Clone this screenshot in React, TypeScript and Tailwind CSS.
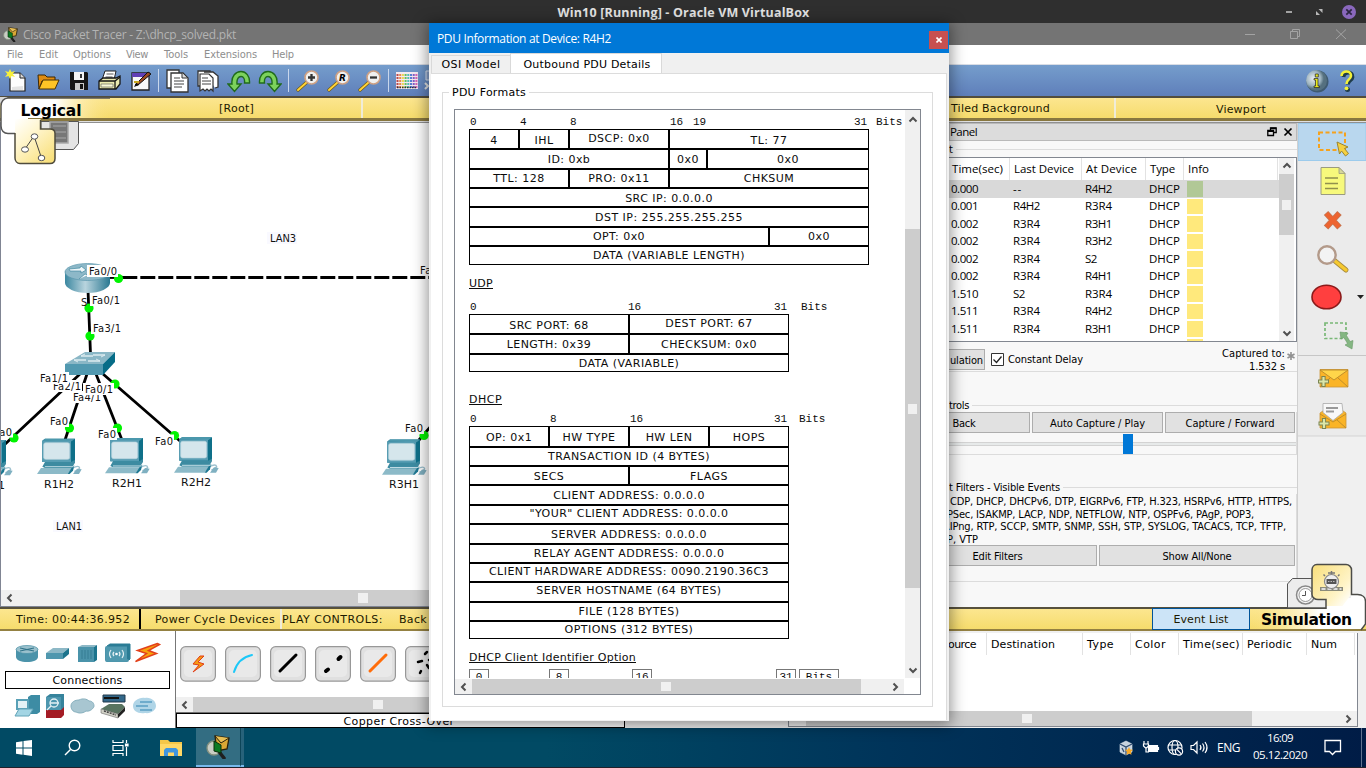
import React, { useLayoutEffect, useRef } from "react";

const VERDANA = "font-['DejaVu_Sans',sans-serif]";
const TAHOMA = "font-['DejaVu_Sans_Condensed','DejaVu_Sans',sans-serif]";
const SEGOE = "font-['Open_Sans','Noto_Sans',sans-serif]";

/** Text tracked so that its run takes exactly `w` pixels. */
function Fit({ w, className = "", flat = false, children }: { w: number; className?: string; flat?: boolean; children: string }) {
  const ref = useRef<HTMLSpanElement>(null);
  useLayoutEffect(() => {
    const el = ref.current;
    if (!el) return;
    el.style.letterSpacing = "0px";
    const natural = el.getBoundingClientRect().width;
    el.style.letterSpacing = `${(w - natural) / children.length}px`;
  }, [w, children]);
  return (
    <span ref={ref} className={`inline-block shrink-0 whitespace-nowrap ${flat ? "" : "pt-[2px]"} ${className}`}>
      {children}
    </span>
  );
}

function Chevron({ dir }: { dir: "up" | "down" | "left" | "right" }) {
  const d = {
    up: "M1.5 6.5L5 3l3.5 3.5",
    down: "M1.5 3.5L5 7l3.5-3.5",
    left: "M6.5 1.5L3 5l3.5 3.5",
    right: "M3.5 1.5L7 5 3.5 8.5",
  }[dir];
  return (
    <svg width="10" height="10" viewBox="0 0 10 10" className="shrink-0">
      <path d={d} fill="none" stroke="#505050" strokeWidth="2" />
    </svg>
  );
}

/* ---------- toolbar ---------- */

const toolIcons: Record<string, React.ReactNode> = {
  new: (
    <>
      <path d="M5 4h10l5 5v13H5z" fill="#fdfdfd" stroke="#222" strokeWidth="1.2" />
      <path d="M15 4v5h5" fill="#ddd" stroke="#222" />
      <path d="M7 18l11-1v4H7z" fill="#e4e4e4" />
      <path d="M5 0l1.5 3L10 2 7.700 5 10 8 6.500 7 5 10 3.500 7 0 8l2.300-3L0 2l3.500 1z" fill="#f7f03c" />
    </>
  ),
  open: (
    <>
      <path d="M2 6h7l2 2h8v4H6L3 20z" fill="#e08c10" stroke="#3c2703" />
      <path d="M7 11h16l-4 9H3z" fill="#ffc426" stroke="#4c3205" />
    </>
  ),
  save: (
    <>
      <path d="M3 3h17l1 1v17H4l-1-1z" fill="#151515" />
      <path d="M7 3h10v8H7z" fill="#f5f5f5" />
      <path d="M13 5h2v4h-2z" fill="#333" />
      <path d="M8 14h9v7H8z" fill="#c9c9c9" />
      <path d="M13 15h3v5h-3z" fill="#111" />
    </>
  ),
  print: (
    <>
      <path d="M7 2h11l-2 9H4z" fill="#fff" stroke="#222" />
      <path d="M8.500 5h7M7.500 8h7" stroke="#555" />
      <path d="M1 12l4-3h13l4-2v8l-4 5H1z" fill="#e9e9b0" stroke="#151515" strokeWidth="1.300" />
      <path d="M1 12h16l5-4M17 12v8" fill="none" stroke="#151515" strokeWidth="1.300" />
      <path d="M3 15h12v3H3z" fill="#f9f9d8" stroke="#555" strokeWidth=".6" />
    </>
  ),
  edit: (
    <>
      <path d="M3 4h17v17H3z" fill="#f8f8f8" stroke="#222" strokeWidth="1.300" />
      <path d="M3 4h17v4H3z" fill="#6140b5" />
      <path d="M6 16L19 3l3 2L9 16z" fill="#9a4a20" stroke="#111" />
      <path d="M5 18l2-4 3 2z" fill="#111" />
      <path d="M5 13h5" stroke="#c7a81e" strokeWidth="2" />
    </>
  ),
  copy: (
    <>
      <path d="M2 1h12v18H2z" fill="#fff" stroke="#333" strokeWidth="1.300" />
      <path d="M6 4h12l5 5v14H6z" fill="#fff" stroke="#333" strokeWidth="1.300" />
      <path d="M17 4v5h5" fill="#ddd" stroke="#333" />
      <path d="M9 9h6M9 12h10M9 15h10M9 18h8" stroke="#444" strokeWidth="1.200" />
    </>
  ),
  paste: (
    <>
      <path d="M2 2h12v15H2z" fill="#fff" stroke="#333" strokeWidth="1.300" />
      <path d="M8 3h9l5 4v11l-3 1" fill="#fff" stroke="#333" strokeWidth="1.300" />
      <path d="M4 5h9l4 4v13l-2-2-2 2-2-2-2 2-2-2-3 2z" fill="#fff" stroke="#333" strokeWidth="1.200" />
      <path d="M6 9h6M6 12h9M6 15h9" stroke="#444" strokeWidth="1.200" />
    </>
  ),
  undo: (
    <path
      d="M1 15h4C4 7 9 2.500 14 2.500S23 7 22.500 14h-5c.5-4-1-6.500-3.500-6.500S9.500 10 10 15h4l-6.500 7.500z"
      fill="#7cd25c"
      stroke="#206b1c"
      strokeWidth="1.400"
    />
  ),
  redo: (
    <path
      d="M23 15h-4c1-8-4-12.500-9-12.500S1 7 1.500 14h5C6 10 7.500 7.500 10 7.500s4.500 2.500 4 7.500h-4l6.500 7.500z"
      fill="#7cd25c"
      stroke="#206b1c"
      strokeWidth="1.400"
    />
  ),
  palette: (
    <>
      <path d="M1 3h22v17H1z" fill="#f4e9f0" />
      {["#b03030", "#e87b2e", "#e8d63a", "#4dbb48", "#39b5b0", "#3c6fd0", "#7046c0", "#d04fae"].map((c, i) => (
        <path key={c} d={`M${2.5 + i * 2.7} 5v14`} stroke={c} strokeWidth="2" strokeDasharray="2 1" opacity={0.85} />
      ))}
      <path d="M2 18.500h20" stroke="#333" strokeDasharray="1.500 1" strokeWidth="1.500" />
    </>
  ),
};

function Lens({ mark }: { mark: "+" | "R" | "-" }) {
  return (
    <>
      <path d="M2 21L11 13" stroke="#6d5410" strokeWidth="3.200" strokeLinecap="round" />
      <path d="M2 21L11 13" stroke="#ffd337" strokeWidth="2" strokeLinecap="round" />
      <circle cx="15.500" cy="8.500" r="6.500" fill="#f0f0f0" stroke="#cfa184" strokeWidth="1.600" />
      {mark === "R" ? (
        <text x="15.500" y="12" textAnchor="middle" fontSize="9" fontWeight="700" fontStyle="italic" fontFamily="DejaVu Sans">
          R
        </text>
      ) : (
        <path d={mark === "+" ? "M12 8.500h7M15.500 5v7" : "M12 8.500h7"} stroke="#333" strokeWidth="2.300" />
      )}
    </>
  );
}

function Tool({ children }: { children: React.ReactNode }) {
  return (
    <div className="flex w-[31px] shrink-0 justify-center">
      <svg width="24" height="24" viewBox="0 0 24 24">
        {children}
      </svg>
    </div>
  );
}

function Toolbar() {
  const sep = <div className="h-[23px] w-px shrink-0 bg-[#c8d6ec]" />;
  return (
    <div className="flex h-[31px] shrink-0 items-center bg-linear-to-b from-[#759dcc] to-[#5f7fba] pl-px">
      <Tool>{toolIcons.new}</Tool>
      <Tool>{toolIcons.open}</Tool>
      <Tool>{toolIcons.save}</Tool>
      <Tool>{toolIcons.print}</Tool>
      <Tool>{toolIcons.edit}</Tool>
      <div className="flex w-[5px] justify-center">{sep}</div>
      <Tool>{toolIcons.copy}</Tool>
      <Tool>{toolIcons.paste}</Tool>
      <Tool>{toolIcons.undo}</Tool>
      <Tool>{toolIcons.redo}</Tool>
      <div className="flex w-[7px] justify-center">{sep}</div>
      <Tool><Lens mark="+" /></Tool>
      <Tool><Lens mark="R" /></Tool>
      <Tool><Lens mark="-" /></Tool>
      <div className="flex w-[6px] justify-center">{sep}</div>
      <Tool>{toolIcons.palette}</Tool>
      <svg width="12" height="24" viewBox="0 0 12 24">
        <path d="M4 2h9v9H4z" fill="#8aa3cc" stroke="#dfe6f2" />
        <path d="M3 14l3 3-3 3M8 14v7" stroke="#e5e5e5" strokeWidth="2" fill="none" />
      </svg>
      <div className="ml-auto flex items-center gap-[10px] pr-[10px]">
        <svg width="24" height="24" viewBox="0 0 24 24">
          <defs>
            <radialGradient id="info" cx=".35" cy=".4">
              <stop offset="0" stopColor="#e8edf0" />
              <stop offset=".7" stopColor="#9db3bf" />
              <stop offset="1" stopColor="#55707f" />
            </radialGradient>
          </defs>
          <circle cx="12.500" cy="12.500" r="11" fill="#3f5a70" />
          <circle cx="11.500" cy="11.500" r="10.500" fill="url(#info)" />
          <path d="M9 9.500h4V17h1.500v1.500H9V17h1.500v-6H9zM10.300 5h3v3h-3z" fill="#e9ea1e" stroke="#222" strokeWidth=".7" />
        </svg>
        <svg width="17" height="24" viewBox="0 0 17 24">
          <path d="M4.500 8C5 2 14 2 13.500 8c-.3 3.500-4.500 3.500-4.500 7.500" fill="none" stroke="#1f3c4a" strokeWidth="3.800" />
          <path d="M2.500 7C3 1 12.500 1 12 7c-.3 3.500-4.500 3.500-4.500 8" fill="none" stroke="#f3f13a" strokeWidth="2.600" />
          <circle cx="8.500" cy="20.500" r="2.500" fill="#1f3c4a" />
          <circle cx="7.500" cy="19.300" r="1.900" fill="#f3f13a" />
        </svg>
      </div>
    </div>
  );
}

/* ---------- logical workspace ---------- */

function Pc({ x, y }: { x: number; y: number }) {
  return (
    <g transform={`translate(${x} ${y}) scale(.3333)`}>
      <path d="M106 88q20-10 22 0-4 8-16 10" fill="none" stroke="#9cc0ce" strokeWidth="4" />
      <path d="M120 90l14 2-8 14h-18z" fill="#7fb0c1" />
      <path d="M26 66h80l8-4v10l-10 16H24l-8-4z" fill="#3d8ba1" />
      <path d="M12 88h94l-14 18H0z" fill="#8cbac8" />
      <path d="M106 84l6-4-4 16-10 10h-6z" fill="#1d7791" />
      <path d="M24 84h86" stroke="#c3dde5" strokeWidth="3" />
      <path d="M16 6l8-6h90v64l-12 6H16z" fill="#0f7089" />
      <path d="M16 6l8-6h90l-10 8z" fill="#4b98ad" />
      <path d="M16 6h86v64H16z" fill="#579db3" />
      <rect x="20" y="12" width="78" height="50" rx="6" fill="#d5e6ec" stroke="#b8d4de" strokeWidth="2" />
    </g>
  );
}

function Dot({ x, y }: { x: number; y: number }) {
  return <circle cx={x} cy={y} r="4.600" fill="#00f400" />;
}

function NodeText({ x, y, w, children, box = true, wide = false }: { x: number; y: number; w: number; children: string; box?: boolean; wide?: boolean }) {
  return (
    <g>
      {box && <rect x={x - 2} y={y - 6} width={w + 3} height="12" fill="#fff" />}
      <text x={x} y={y + 4} textLength={w} fontSize="11" fontFamily={wide ? "'DejaVu Sans'" : "'DejaVu Sans Condensed','DejaVu Sans'"} fill="#111">
        {children}
      </text>
    </g>
  );
}

function Workspace() {
  return (
    <svg width="428" height="467" viewBox="1 123 428 467" className="block shrink-0 bg-white">
      <defs>
        <linearGradient id="steel">
          <stop offset="0" stopColor="#3b87a0" />
          <stop offset=".45" stopColor="#b9d4de" />
          <stop offset="1" stopColor="#2a7891" />
        </linearGradient>
      </defs>
      <path d="M110 277.500H124" stroke="#000" strokeWidth="2.800" />
      <path d="M122.300 277.500H429" stroke="#000" strokeWidth="2.800" strokeDasharray="15 3" />
      <g stroke="#000" strokeWidth="2.800">
        <path d="M88 290l2.500 64M80 374L2 447M87 374L65 440M96 374l26 66M103 374l77 67M419 440l12-14" />
      </g>
      <path d="M65 271v12c0 5 10 10 22.500 10S110 288 110 283v-12z" fill="url(#steel)" />
      <ellipse cx="87.500" cy="272" rx="22.500" ry="8.500" fill="#8db8c8" stroke="#5b98ad" strokeWidth=".7" />
      <path d="M69 269l11-1 1-2 5 4-5 3v-2l-11 0zM79 279l6-5 3 1" fill="#eef6f9" stroke="#2f7e97" strokeWidth=".6" />
      <path d="M65 364l20-12h30l-12 12z" fill="#8ab7c6" />
      <path d="M65 364h38v11H65z" fill="#5199b0" />
      <path d="M103 364l12-12v10l-12 13z" fill="#066c87" />
      <path d="M81 356h12M74 360h12M93 355h12M88 361h12" stroke="#dcebf0" strokeWidth="1.500" />
      <path d="M81 356l4-2M105 355l-4 2M74 360l4 2M100 361l-4-2" stroke="#dcebf0" />
      <Dot x={14} y={438} />
      <Dot x={69.5} y={428} />
      <Dot x={117.5} y={428} />
      <Dot x={174.5} y={435.5} />
      <Dot x={115} y={384} />
      <Dot x={118.5} y={278.5} />
      <Dot x={89} y={308} />
      <Dot x={90} y={336} />
      <Dot x={424} y={435.5} />
      <Pc x={-32} y={440} />
      <Pc x={37} y={438.7} />
      <Pc x={105} y={438} />
      <Pc x={174} y={437.3} />
      <Pc x={382} y={439.5} />
      <NodeText x={81} y={302} w={7} box={false}>S</NodeText>
      <NodeText x={89} y={271} w={28}>Fa0/0</NodeText>
      <NodeText x={92} y={300} w={28}>Fa0/1</NodeText>
      <NodeText x={93} y={328} w={28}>Fa3/1</NodeText>
      <NodeText x={73} y={397} w={28}>Fa4/1</NodeText>
      <NodeText x={53} y={386} w={28}>Fa2/1</NodeText>
      <NodeText x={40} y={378} w={28}>Fa1/1</NodeText>
      <NodeText x={85} y={389} w={28}>Fa0/1</NodeText>
      <NodeText x={-6} y={431.5} w={18}>Fa0</NodeText>
      <NodeText x={50} y={421} w={18}>Fa0</NodeText>
      <NodeText x={98} y={434} w={18}>Fa0</NodeText>
      <NodeText x={155} y={440.5} w={18}>Fa0</NodeText>
      <NodeText x={420} y={270} w={18}>Fa0</NodeText>
      <NodeText x={405} y={428} w={18}>Fa0</NodeText>
      <NodeText x={-24} y={485} w={29} box={false} wide>R1H1</NodeText>
      <NodeText x={44} y={483.5} w={30} box={false} wide>R1H2</NodeText>
      <NodeText x={112} y={482.5} w={30} box={false} wide>R2H1</NodeText>
      <NodeText x={181} y={481.5} w={30} box={false} wide>R2H2</NodeText>
      <NodeText x={389} y={484} w={30} box={false} wide>R3H1</NodeText>
      <rect x="267" y="232" width="30" height="12" fill="#f9f9ff" />
      <rect x="53" y="520" width="30" height="12" fill="#f9f9ff" />
      <NodeText x={270} y={238} w={26} box={false}>LAN3</NodeText>
      <NodeText x={56} y={526} w={26} box={false}>LAN1</NodeText>
    </svg>
  );
}

/* ---------- simulation panel ---------- */

const events = [
  ["0.000", "--", "R4H2"],
  ["0.001", "R4H2", "R3R4"],
  ["0.002", "R3R4", "R3H1"],
  ["0.002", "R3R4", "R3H2"],
  ["0.002", "R3R4", "S2"],
  ["0.002", "R3R4", "R4H1"],
  ["1.510", "S2", "R3R4"],
  ["1.511", "R3R4", "R4H2"],
  ["1.511", "R3R4", "R3H1"],
];

function EventTable() {
  const head = "flex h-full items-center border-r border-[#e2e2e2]";
  return (
    <div className={`flex h-[185px] shrink-0 overflow-hidden border-y border-r border-[#828790] bg-white text-[11.5px] text-black ${SEGOE}`}>
      <div className="w-[330px] shrink-0">
        <div className="flex h-[22px] items-center">
          <div className={`${head} w-[61px] pl-[3px]`}><Fit flat w={51}>Time(sec)</Fit></div>
          <div className={`${head} w-[72px] pl-[4px]`}><Fit flat w={60}>Last Device</Fit></div>
          <div className={`${head} w-[64px] pl-[4px]`}><Fit flat w={51}>At Device</Fit></div>
          <div className={`${head} w-[38px] pl-[4px]`}><Fit flat w={25}>Type</Fit></div>
          <div className={`${head} w-[94px] pl-[4px]`}><Fit flat w={21}>Info</Fit></div>
        </div>
        {events.map(([t, last, at], i) => (
          <div key={i} className={`flex h-[17.5px] items-center ${i === 0 ? "bg-[#d9d9d9]" : ""}`}>
            <div className="w-[64px] pl-[2px]"><Fit flat w={27}>{t}</Fit></div>
            <div className="w-[72px]"><Fit flat w={last.length === 4 ? 27 : last === "--" ? 9 : 12}>{last}</Fit></div>
            <div className="w-[64px]"><Fit flat w={at.length === 4 ? 27 : 12}>{at}</Fit></div>
            <div className="w-[38px]"><Fit flat w={31}>DHCP</Fit></div>
            <div className={`h-[15.5px] w-[16px] ${i === 0 ? "bg-[#b1c896]" : "bg-[#ffe97c]"}`} />
          </div>
        ))}
        <div className="mt-px ml-[238px] h-[5px] w-[16px] bg-[#ffe97c]" />
      </div>
      <div className="flex w-[15px] shrink-0 flex-col items-center bg-[#f0f0f0]">
        <div className="flex h-[16px] items-center"><Chevron dir="up" /></div>
        <div className="flex h-[61px] w-full items-center justify-center bg-[#cdcdcd]">
          <div className="h-[10px] w-[9px] bg-[#f0f0f0]" />
        </div>
        <div className="mt-auto flex h-[17px] items-center"><Chevron dir="down" /></div>
      </div>
    </div>
  );
}

function PushButton({ className, children, w }: { className: string; children: string; w: number }) {
  return (
    <div className={`flex h-[21px] shrink-0 items-center justify-center border border-[#adadad] bg-[#e1e1e1] ${className}`}>
      <Fit w={w}>{children}</Fit>
    </div>
  );
}

function SimulationPanel() {
  return (
    <div className={`flex w-[348px] shrink-0 flex-col overflow-hidden bg-[#f8f8f8] text-[11px] leading-[12px] text-black ${TAHOMA}`}>
      <div className="flex h-[18px] shrink-0 items-center border border-[#b9b9b9] bg-[#dcdcdc] pr-[3px]">
        <Fit flat w={27} className={`text-[11.5px] ${SEGOE}`}>Panel</Fit>
        <svg width="26" height="10" viewBox="0 0 26 10" className="ml-auto">
          <path d="M3.500 3V.8h5.700v4.700H7M.800 3.500h5.700v5H.800z" fill="none" stroke="#000" strokeWidth="1.300" />
          <path d="M3.500 1.300h5.700M.800 4.200h5.700" stroke="#000" strokeWidth="1.700" />
          <path d="M17.500 1.500l7 7M24.500 1.500l-7 7" stroke="#000" strokeWidth="1.700" />
        </svg>
      </div>
      <div className="flex h-[16px] shrink-0 items-center gap-[3px] pt-px">
        <span className="pt-px">t</span>
        <div className="h-px grow bg-[#dcdcdc]" />
      </div>
      <EventTable />
      <div className="flex h-[30px] shrink-0 items-center border-b border-[#dcdcdc] pt-[5px]">
        <PushButton className="mt-[2px] -ml-px w-[37px] self-start" w={33}>ulation</PushButton>
        <svg width="13" height="13" viewBox="0 0 13 13" className="ml-[6px] shrink-0">
          <path d="M.5.5h12v12H.5z" fill="#fff" stroke="#333" />
          <path d="M2.500 6.500l3 3 5-6" fill="none" stroke="#222" strokeWidth="1.300" />
        </svg>
        <Fit w={75} className="ml-[4px]">Constant Delay</Fit>
        <div className="-mt-[1px] ml-auto flex flex-col items-end leading-[11px]">
          <Fit w={63}>Captured to:</Fit>
          <Fit w={36}>1.532 s</Fit>
        </div>
        <svg width="10" height="10" viewBox="0 0 10 10" className="-mt-[7px] mr-[1px] ml-px">
          <path d="M5 1v8M1.500 3l7 4M8.500 3l-7 4" stroke="#909090" strokeWidth="1.600" />
        </svg>
      </div>
      <div className="mt-[26px] flex h-[14px] shrink-0 items-center gap-[3px]">
        <Fit w={20}>trols</Fit>
        <div className="h-px grow bg-[#dcdcdc]" />
      </div>
      <div className="flex shrink-0 flex-col border-r border-b border-[#dcdcdc]">
        <div className="flex gap-[2px]">
          <PushButton className="-ml-px w-[82px] pr-[50px]" w={23}>Back</PushButton>
          <PushButton className="w-[131px]" w={95}>Auto Capture / Play</PushButton>
          <PushButton className="w-[130px]" w={89}>Capture / Forward</PushButton>
        </div>
        <div className="flex h-[21px] items-center">
          <div className="h-[4px] w-[174px] border-y border-[#d3d3d3] bg-[#e7eaea]" />
          <div className="h-[20px] w-[10px] bg-[#0078d7]" />
          <div className="h-[4px] grow border-y border-[#d3d3d3] bg-[#e7eaea]" />
        </div>
      </div>
      <div className="mt-[25px] flex h-[14px] shrink-0 items-center gap-[3px]">
        <Fit w={111}>t Filters - Visible Events</Fit>
        <div className="h-px grow bg-[#dcdcdc]" />
      </div>
      <div className="flex h-[88px] shrink-0 flex-col border-r border-b border-[#dcdcdc]">
        <div className="flex h-[51px] shrink-0 flex-col items-start pt-[2px] leading-[12.6px]">
          <Fit flat w={342} className="ml-px">CDP, DHCP, DHCPv6, DTP, EIGRPv6, FTP, H.323, HSRPv6, HTTP, HTTPS,</Fit>
          <Fit flat w={307} className="-ml-[2px]">PSec, ISAKMP, LACP, NDP, NETFLOW, NTP, OSPFv6, PAgP, POP3,</Fit>
          <Fit flat w={343} className="-ml-[6px]">RIPng, RTP, SCCP, SMTP, SNMP, SSH, STP, SYSLOG, TACACS, TCP, TFTP,</Fit>
          <Fit flat w={31} className="-ml-[2px]">P, VTP</Fit>
        </div>
        <div className="flex gap-[2px]">
          <PushButton className="-ml-px w-[149px] pr-[50px] pl-0" w={50}>Edit Filters</PushButton>
          <PushButton className="w-[196px]" w={69}>Show All/None</PushButton>
        </div>
      </div>
    </div>
  );
}

function SideTools() {
  return (
    <div className="flex w-[69px] shrink-0 flex-col border-l border-[#d0d0d0] bg-[#f0f0f0]">
      <svg width="68" height="314" viewBox="1298 123 68 314" className="block">
        <path d="M1298 123h68v313h-68z" fill="#ebebeb" />
        <path d="M1298 123.500h68v37h-68z" fill="#b9d7ee" stroke="#9ccbec" />
        <rect x="1319" y="132.500" width="26" height="17.500" fill="none" stroke="#f5a21d" strokeWidth="2" strokeDasharray="4 2.500" />
        <path d="M1337 142l11 5-3.500 1.500 4 5-3 2.500-4-5-2 3z" fill="#f5d040" stroke="#9b8531" />
        <path d="M1321 167.500h18l6 6v21h-24z" fill="#f7f97c" stroke="#9b9b80" />
        <path d="M1339 167.500v6h6z" fill="#d6d89a" stroke="#9b9b80" strokeWidth=".8" />
        <path d="M1325 178h13M1325 183.500h13M1325 188.500h13" stroke="#90904d" strokeWidth="1.400" />
        <path d="M1326 213l13.500 14.500M1339.500 213L1326 227.500" stroke="#c47652" strokeWidth="6" />
        <path d="M1326.500 213.500l12.500 13.500M1339 213.500L1326.500 227" stroke="#ed6430" strokeWidth="4.500" />
        <path d="M1335 261l11 9" stroke="#a78b3f" strokeWidth="5" strokeLinecap="round" />
        <path d="M1335 261l11 9" stroke="#f6c92f" strokeWidth="3.300" strokeLinecap="round" />
        <circle cx="1327" cy="255" r="8.700" fill="#f3f3f3" stroke="#b39a8a" strokeWidth="2.400" />
        <ellipse cx="1326.500" cy="297" rx="14.500" ry="11.700" fill="#ff3f3f" stroke="#8b1a1a" strokeWidth="1.600" />
        <path d="M1357 295h7l-3.500 4z" fill="#222" />
        <rect x="1325" y="323" width="21" height="15.500" fill="none" stroke="#79b877" strokeWidth="1.700" strokeDasharray="3 2" />
        <path d="M1340 332l8 1-1.500 2.500 3.500 6 3-1-1 8.500-7-4 2.500-1.500-3.500-6-3 1.500z" fill="#84b682" stroke="#6a9868" strokeWidth=".6" />
        <path d="M1298 355.500h68" stroke="#c6c6c6" />
        <path d="M1320 369.500h28v17.500h-28z" fill="#fab427" stroke="#c99538" strokeWidth=".8" />
        <path d="M1320 370l14 10 14-10zM1320 387l10-9M1348 387l-10-9" fill="#ffd54a" stroke="#b9892a" strokeWidth=".9" />
        <path d="M1323.500 376v11M1318 381.500h11" stroke="#7a8452" strokeWidth="4.200" />
        <path d="M1323.500 377v9M1319 381.500h9" stroke="#dbe6a8" strokeWidth="2.200" />
        <path d="M1320 413l13-9 13 9v15h-26z" fill="#fab427" stroke="#c99538" strokeWidth=".8" />
        <path d="M1323 403.500h19l1 9-10 8-10-8z" fill="#f8f8f8" stroke="#aaa" strokeWidth=".8" />
        <path d="M1326 408h12M1326 411.500h8" stroke="#999" strokeWidth="2" />
        <path d="M1320 414l13 8 13-8M1337 420l9 8" fill="none" stroke="#b9892a" strokeWidth=".9" />
        <path d="M1324 418v11M1318.500 423.500h11" stroke="#7a8452" strokeWidth="4.200" />
        <path d="M1324 419v9M1319.500 423.500h9" stroke="#dbe6a8" strokeWidth="2.200" />
        <path d="M1298 436h68" stroke="#d3d3d3" />
      </svg>
    </div>
  );
}

/* ---------- corner tabs ---------- */

function LogicalTab() {
  return (
    <svg width="110" height="70" viewBox="0 97 110 70" className="absolute top-[97px] left-0">
      <defs>
        <linearGradient id="fade">
          <stop offset="0" stopColor="#fff" />
          <stop offset=".5" stopColor="#fff" />
          <stop offset="1" stopColor="#fbe389" stopOpacity="0" />
        </linearGradient>
        <linearGradient id="gold" x1="0" y1="0" x2=".8" y2="1">
          <stop offset="0" stopColor="#fff" />
          <stop offset=".4" stopColor="#fff6cf" />
          <stop offset="1" stopColor="#f9e07d" />
        </linearGradient>
      </defs>
      <path d="M0 97h8l-8 7z" fill="#d8d8d8" />
      <path d="M41 121.500h37.500v22l-5 6H41z" fill="#e4e4e4" stroke="#555" />
      <path d="M50 122h18v21H50z" fill="#777" stroke="#a9a9a9" strokeWidth="1.500" />
      <path d="M53 126h13M53 132h13M53 138h13" stroke="#909090" strokeWidth="2" />
      <path d="M110 98.500H8c-4 0-7 3-7 7V126c0 4 3 7 7 7h20V118h82z" fill="url(#fade)" />
      <path d="M110 98H8c-4 0-7 3.500-7 8v20c0 4.500 3 7.500 7 7.500h7" fill="none" stroke="#555" strokeWidth="1.500" />
      <path d="M15 119v39c0 3 2 5.500 5 5.500h30c3 0 5-2 5-5v-25c0-3-2-4.500-5-4.500h-9.500V119z" fill="url(#gold)" />
      <path d="M15 133v25c0 3 2 5.500 5 5.500h30c3 0 5-2 5-5v-25c0-3-2-4.500-5-4.500h-9.500v-9" fill="none" stroke="#4f4b3c" strokeWidth="1.500" />
      <path d="M25 149l9-13 7.500 22" fill="none" stroke="#444" />
      <g fill="#fff" stroke="#555">
        <ellipse cx="34.500" cy="136.500" rx="3.300" ry="2.700" />
        <ellipse cx="25" cy="149.500" rx="3.500" ry="2.700" />
        <ellipse cx="41.500" cy="158" rx="3.300" ry="2.700" />
      </g>
      <text x="20.500" y="116" textLength="61" fontSize="15.500" fontWeight="700" fontFamily="DejaVu Sans">
        Logical
      </text>
    </svg>
  );
}

function SimulationTab() {
  return (
    <svg width="116" height="70" viewBox="1250 562 116 70" className="absolute top-[562px] left-[1250px]">
      <defs>
        <linearGradient id="fadeR">
          <stop offset="0" stopColor="#fbe389" stopOpacity="0" />
          <stop offset=".6" stopColor="#fff" />
        </linearGradient>
        <linearGradient id="goldR" x1="0" y1="0" x2="1" y2=".9">
          <stop offset="0" stopColor="#f9df7b" />
          <stop offset=".7" stopColor="#fff4c8" />
          <stop offset="1" stopColor="#fff" />
        </linearGradient>
      </defs>
      <path d="M1287.500 608v-24l5-5.500H1330V608z" fill="#ececec" stroke="#555" />
      <circle cx="1305.500" cy="595" r="9" fill="#f6f6f6" stroke="#888" strokeWidth="1.500" />
      <circle cx="1305.500" cy="595" r="6.500" fill="#fff" stroke="#999" />
      <path d="M1305.500 591v4.500h-3.500" fill="none" stroke="#555" />
      <path d="M1250 609h76v-11h30c6 0 9.500 3 9.500 8v19l-5 4H1250z" fill="url(#fadeR)" />
      <path d="M1326 609v-10h25v-5h6c5 0 9 3 9 8v22l-5 5h-35z" fill="#fff" />
      <path d="M1312 570c0-3 2-5.500 5-5.500h29c3 0 5.500 2.500 5.500 5.500v24l-9 12H1326v-6.500h-8c-3 0-6-2-6-5z" fill="url(#goldR)" />
      <path d="M1250 608.300h76v-8.800h-8c-3 0-6-2-6-5V570c0-3 2-5.500 5-5.500h29c3 0 5.500 2.500 5.500 5.500v24.500h6c5 0 8 3 8 7V624l-4.500 6" fill="none" stroke="#4c4c48" strokeWidth="1.500" />
      <path d="M1320 589h23" stroke="#8b8b7b" strokeWidth="4" />
      <path d="M1321.500 589h20" stroke="#ddd" strokeWidth="2" strokeDasharray="4 2" />
      <circle cx="1331.500" cy="581.500" r="7" fill="#eee" stroke="#888" strokeWidth="1.200" />
      <path d="M1328 573h7M1331.500 571v3M1325 576l-1.500-1.500M1338 576l1.500-1.500" stroke="#777" strokeWidth="1.500" />
      <path d="M1326.500 579h10v5h-10z" fill="#555" />
      <path d="M1328 581.500h7" stroke="#bbb" strokeDasharray="1.500 1" />
      <text x="1261" y="624.500" textLength="91" fontSize="15.500" fontWeight="700" fontFamily="DejaVu Sans">
        Simulation
      </text>
    </svg>
  );
}

/* ---------- bottom area ---------- */

const bolt = "M22 1L2 8l9 3-11 8 21-8-8-3 11-6z";

function DevicePalette() {
  return (
    <div className={`flex w-[176px] shrink-0 flex-col items-center border-r border-[#777] bg-white ${VERDANA}`}>
      <svg width="175" height="40" viewBox="0 631 175 40">
        <path d="M16 649v8c0 3 5 5 11 5s11-2 11-5v-8z" fill="#4b93aa" />
        <ellipse cx="27" cy="649.500" rx="11" ry="4" fill="#9bc1cd" stroke="#4a90a6" strokeWidth=".7" />
        <path d="M20 648l14 3M34 648l-14 3" stroke="#2f7389" strokeWidth="1.200" />
        <path d="M46 653l7-5h16l-6 5z" fill="#8db8c6" />
        <path d="M46 653h17v6H46z" fill="#4f97ae" />
        <path d="M63 653l6-5v6l-6 5z" fill="#1c748d" />
        <path d="M78 647l4-2h15l-3 2z" fill="#8db8c6" />
        <path d="M78 647h16v15H78z" fill="#4a93aa" />
        <path d="M94 647l3-2v15l-3 2z" fill="#1c748d" />
        <path d="M82 650v9M85 650v9M88 650v9M91 650v9" stroke="#357c93" />
        <rect x="105" y="646" width="24" height="16" rx="2" fill="#4a93aa" />
        <path d="M107 646l3-2h20v15l-1 1" fill="#2a7c95" stroke="#2a7c95" />
        <path d="M106 646.500h21v15h-21z" fill="#5099af" />
        <path d="M111 650q-3 4 0 8M114 652q-2 2 0 4M122 650q3 4 0 8M119 652q2 2 0 4" fill="none" stroke="#e6f1f4" strokeWidth="1.200" />
        <circle cx="116.500" cy="654" r="1.300" fill="#fff" />
        <g transform="translate(135.500 642.500)">
          <path d={bolt} fill="#f8a20c" stroke="#e2401b" strokeWidth="1.500" />
        </g>
      </svg>
      <div className="flex h-[18px] w-[165px] shrink-0 items-center justify-center border border-black bg-white text-[11px]">
        <Fit w={70}>Connections</Fit>
      </div>
      <svg width="175" height="38" viewBox="0 689 175 38">
        <path d="M28 697l3-2h9v17l-3 2h-9z" fill="#3d8ca4" />
        <path d="M16 699h13v11H16z" fill="#58a0b6" />
        <path d="M18 701h9v7h-9z" fill="#e4f1f5" />
        <path d="M19 709h14l-4 7H15z" fill="#a3d5e4" stroke="#63a4b8" />
        <path d="M46 697l4-3h14v17l-4 3H46z" fill="#36839c" />
        <path d="M46 697h15v13H46z" fill="#4d96ae" />
        <path d="M46 710h15l3-3v8l-3 3H46z" fill="#a41c25" />
        <circle cx="54" cy="703" r="4" fill="none" stroke="#e4f0f4" strokeWidth="1.300" />
        <path d="M51 706l-4 4M50 703h9" stroke="#e4f0f4" strokeWidth="1.300" />
        <path d="M71 706c0-4 4-6 8-6 4-2 8-1 10 1 4 0 5 3 5 5s-4 6-8 5c-4 3-8 2-10 1-3 0-5-3-5-6z" fill="#a8c6d1" stroke="#86afbd" />
        <path d="M103 695h22v7h-22z" fill="#33688a" stroke="#20384a" />
        <path d="M104 698h15" stroke="#111" strokeWidth="2" />
        <path d="M101 709l8-5h13l3 3-7 7z" fill="#587460" />
        <path d="M101 709l17 5v4l-17-5z" fill="#d2d2c8" stroke="#555" strokeWidth=".5" />
        <path d="M104 711l12 4" stroke="#444" strokeWidth="1.500" strokeDasharray="2 1" />
        <path d="M118 714l7-7v4l-7 7z" fill="#222" />
        <path d="M133 706c0-5 6-9 12-8 6-1 11 3 11 8 0 4-5 8-11 7-7 1-12-2-12-7z" fill="#b0d5e7" />
        <path d="M140 702h12M136 706h12M140 710h12" stroke="#5a9fc4" strokeWidth="1.600" />
      </svg>
    </div>
  );
}

const cables: React.ReactNode[] = [
  <path d="M20 10l-7 8 6 1-6 7 11-8-6-2 6-6z" fill="#f59a14" stroke="#e23c16" />,
  <path d="M9 26Q13 12 27 9" fill="none" stroke="#1cc8f8" strokeWidth="2" strokeLinecap="round" />,
  <path d="M10 25L26 9" stroke="#000" strokeWidth="3" strokeLinecap="round" />,
  <path d="M11 25l2-1.500M23.500 13l2-2" stroke="#000" strokeWidth="4" strokeLinecap="round" />,
  <path d="M10 25L26 9" stroke="#ff6d0a" strokeWidth="3" strokeLinecap="round" />,
  <path d="M13 16l4-1M20 8l2-2M15 27l1-2M22 19l2 3M24 14l3 1" stroke="#000" strokeWidth="2.500" strokeLinecap="round" />,
];

function CableList() {
  return (
    <div className="flex w-[449px] shrink-0 flex-col bg-white">
      <div className="flex h-[66px] shrink-0 gap-[9px] overflow-hidden pt-[15px] pl-[3.5px]">
        {cables.map((c, i) => (
          <svg key={i} width="36" height="36" viewBox="0 0 36 36" className="shrink-0">
            <rect x=".6" y=".6" width="34.800" height="34.500" rx="5" fill="#e0e0e0" stroke="#989898" strokeWidth="1.200" />
            <rect x="4" y="4" width="28" height="27" rx="5" fill="#e9e9e9" />
            {c}
          </svg>
        ))}
      </div>
      <div className="flex h-[16px] shrink-0 items-center border-b border-[#6f6f6f] bg-[#f0f0f0]">
        <div className="flex w-[17px] justify-center"><Chevron dir="left" /></div>
        <div className="flex h-full grow items-center bg-[#cdcdcd]">
          <div className="ml-[180px] h-[9px] w-[10px] bg-[#f0f0f0]" />
        </div>
      </div>
      <div className={`flex h-[15px] shrink-0 items-center justify-center border border-black bg-white pr-[3px] text-[11px] leading-[13px] ${VERDANA}`}>
        <Fit w={111}>Copper Cross-Over</Fit>
      </div>
    </div>
  );
}

function ScenarioTable() {
  const cell = "flex h-full items-center border-r border-[#e2e2e2] pl-[4px]";
  return (
    <div className={`mt-[2px] mb-px flex w-[570px] shrink-0 flex-col border-r border-b border-l border-[#828790] bg-white text-[11px] ${VERDANA}`}>
      <div className="flex h-[22px] shrink-0 items-center pl-[155px]">
        <div className={`${cell} w-[43px]`}><Fit w={28}>ource</Fit></div>
        <div className={`${cell} w-[96px]`}><Fit w={64}>Destination</Fit></div>
        <div className={`${cell} w-[48px]`}><Fit w={27}>Type</Fit></div>
        <div className={`${cell} w-[48px]`}><Fit w={31}>Color</Fit></div>
        <div className={`${cell} w-[64px]`}><Fit w={57}>Time(sec)</Fit></div>
        <div className={`${cell} w-[64px]`}><Fit w={45}>Periodic</Fit></div>
        <div className={`${cell} w-[48px]`}><Fit w={26}>Num</Fit></div>
      </div>
      <div className="mt-auto flex h-[15px] shrink-0 items-center bg-[#f0f0f0]">
        <div className="ml-[17px] flex h-full w-[446px] items-center bg-[#cdcdcd]">
          <div className="ml-[216px] h-[9px] w-[10px] bg-[#f0f0f0]" />
        </div>
        <div className="ml-auto pr-[4px]"><Chevron dir="right" /></div>
      </div>
    </div>
  );
}

function PacketLogo({ size }: { size: number }) {
  return (
    <svg width={size} height={size} viewBox="0 0 24 24">
      <circle cx="8" cy="13" r="7" fill="#c9cdc4" stroke="#85907f" strokeWidth="1.300" />
      <path d="M14 18l4 5" stroke="#1f1f1f" strokeWidth="3.500" strokeLinecap="round" />
      <path d="M9 1l14 2-2 11-10 2z" fill="#d9a735" stroke="#2a210b" strokeWidth="1.300" />
      <path d="M9 1l6 7 8-5" fill="#e8bf55" stroke="#2a210b" />
      <path d="M8 6l7 4v8l-7-2z" fill="#0c7a22" stroke="#0a2e0c" />
    </svg>
  );
}

function Taskbar() {
  return (
    <div className={`flex h-[40px] shrink-0 items-center border-b border-[#20212b] bg-linear-to-r from-[#014a64] from-40% via-[#00345a] via-65% to-[#001c46] text-[12px] text-white ${SEGOE}`}>
      <div className="flex w-[48px] justify-center">
        <svg width="16" height="16" viewBox="0 0 16 16" fill="#fff">
          <path d="M0 2.200l6.500-.9v6.200H0zM7.500 1.100L16 0v7.500H7.500zM0 8.500h6.500v6.200L0 13.800zM7.500 8.500H16V16l-8.500-1.200z" />
        </svg>
      </div>
      <div className="flex w-[48px] justify-center">
        <svg width="17" height="17" viewBox="0 0 17 17" fill="none" stroke="#fff" strokeWidth="1.400">
          <circle cx="10.500" cy="6.500" r="5.300" />
          <path d="M6.500 10.500L1 16" />
        </svg>
      </div>
      <div className="flex w-[48px] justify-center">
        <svg width="17" height="16" viewBox="0 0 17 16" fill="none" stroke="#fff" strokeWidth="1.200">
          <path d="M1 0v2.500h10V0M1 16v-2.500h10V16M1 5.500h10v5H1zM14.500 0v3M14.500 7v9" />
          <path d="M13.500 4h2.500v2h-2.500z" fill="#fff" />
        </svg>
      </div>
      <div className="ml-[2px] flex w-[50px] justify-center">
        <svg width="22" height="18" viewBox="0 0 22 18">
          <path d="M0 1h8l2 2h12v14H0z" fill="#f5c748" />
          <path d="M0 5h22v12H0z" fill="#ffd866" />
          <path d="M4 17v-6l2-2h10l2 2v6h-4v-3.500H8V17z" fill="#3f96df" />
        </svg>
      </div>
      <div className="flex h-full w-[44px] items-center justify-center border-b-2 border-[#76b9ed] bg-[#336d82]">
        <PacketLogo size={24} />
      </div>
      <div className="h-full w-[4px] border-b-2 border-l border-[#76b9ed] border-l-[#0d4558] bg-[#28627a]" />
      <div className="ml-auto flex items-center">
        <svg width="94" height="20" viewBox="1117 738 94 20" fill="none" stroke="#fff" strokeWidth="1.200">
          <path d="M1120 744l6-3 6 3v8l-6 3-6-3z" fill="#c7d3de" stroke="#dfe7ee" strokeWidth=".6" />
          <path d="M1120 744l6 3 6-3M1126 747v8" stroke="#2c4a6e" />
          <path d="M1122 748l2 4" stroke="#2c4a6e" />
          <path d="M1129 747l1.200 2.400 2.800.3-2 2 .500 3-2.500-1.300-2.500 1.300.500-3-2-2 2.800-.3z" fill="#f7a928" stroke="none" />
          <path d="M1144 741v3M1148 741v3M1143.500 744h5v2l-2.500 2.500-2.500-2.500zM1146 748v4h3" />
          <path d="M1148.500 745.500h9v6h-9zM1158.500 747v3" />
          <path d="M1149 746h8v5h-8z" fill="#fff" stroke="none" />
          <circle cx="1175" cy="747.500" r="7" />
          <ellipse cx="1175" cy="747.500" rx="3" ry="7" />
          <path d="M1168.500 745h13M1168.500 750h7" />
          <circle cx="1179" cy="751.500" r="3.600" fill="#00204b" />
          <path d="M1176.800 749.300l4.500 4.500" />
          <path d="M1191 745.500h2.500l3.500-3.500v11l-3.500-3.500h-2.500zM1200 745q2 2.500 0 5M1202.500 743.500q3 4 0 8M1205 742q4 5.500 0 11" />
        </svg>
        <Fit flat w={23} className="ml-[6px]">ENG</Fit>
        <div className="-mt-[3px] ml-[12px] flex w-[56px] flex-col items-center text-[11.5px] leading-[17.500px]">
          <Fit flat w={26}>16:09</Fit>
          <Fit flat w={54}>05.12.2020</Fit>
        </div>
        <svg width="18" height="17" viewBox="0 0 18 17" className="ml-[16px]">
          <path d="M1 1.500h15.500v11h-5l-3 3-3-3H1z" fill="none" stroke="#fff" strokeWidth="1.300" />
        </svg>
        <div className="ml-[19px] h-[39px] w-[5px] border-l border-[#5f7390]" />
      </div>
    </div>
  );
}

/* ---------- PDU dialog ---------- */

type Cell = { t: string; w: string; up?: boolean };
const c = (t: string, w: string, up = false): Cell => ({ t, w, up });

const ipRows: Cell[][] = [
  [c("4", "w-[50px]"), c("IHL", "w-[50px]"), c("DSCP: 0x0", "w-[100px]", true), c("TL: 77", "w-[200px]")],
  [c("ID: 0xb", "w-[200px]"), c("0x0", "w-[38px]"), c("0x0", "w-[162px]")],
  [c("TTL: 128", "w-[100px]"), c("PRO: 0x11", "w-[100px]"), c("CHKSUM", "w-[200px]")],
  [c("SRC IP: 0.0.0.0", "w-[400px]")],
  [c("DST IP: 255.255.255.255", "w-[400px]")],
  [c("OPT: 0x0", "w-[300px]"), c("0x0", "w-[100px]")],
  [c("DATA (VARIABLE LENGTH)", "w-[400px]")],
];
const udpRows: Cell[][] = [
  [c("SRC PORT: 68", "w-[160px]"), c("DEST PORT: 67", "w-[160px]", true)],
  [c("LENGTH: 0x39", "w-[160px]"), c("CHECKSUM: 0x0", "w-[160px]")],
  [c("DATA (VARIABLE)", "w-[320px]")],
];
const dhcpRows: Cell[][] = [
  [c("OP: 0x1", "w-[80px]"), c("HW TYPE", "w-[80px]"), c("HW LEN", "w-[80px]"), c("HOPS", "w-[80px]")],
  [c("TRANSACTION ID (4 BYTES)", "w-[320px]")],
  [c("SECS", "w-[160px]"), c("FLAGS", "w-[160px]")],
  [c("CLIENT ADDRESS: 0.0.0.0", "w-[320px]")],
  [c('"YOUR" CLIENT ADDRESS: 0.0.0.0', "w-[320px]", true)],
  [c("SERVER ADDRESS: 0.0.0.0", "w-[320px]")],
  [c("RELAY AGENT ADDRESS: 0.0.0.0", "w-[320px]")],
  [c("CLIENT HARDWARE ADDRESS: 0090.2190.36C3", "w-[320px]", true)],
  [c("SERVER HOSTNAME (64 BYTES)", "w-[320px]", true)],
  [c("FILE (128 BYTES)", "w-[320px]")],
  [c("OPTIONS (312 BYTES)", "w-[320px]", true)],
];

function Frame({ rows }: { rows: Cell[][] }) {
  return (
    <div className="flex shrink-0 flex-col">
      {rows.map((row, i) => (
        <div
          key={i}
          className={`flex h-[19.36px] shrink-0 border-black ${i ? "border-t-2" : "border-t"} ${i === rows.length - 1 ? "border-b" : ""}`}
        >
          {row.map((cell, j) => (
            <div
              key={j}
              className={`flex h-full shrink-0 items-center justify-center border-x border-black leading-[14px] ${cell.w} ${
                cell.up ? "pb-[1px]" : i ? "pt-[2px]" : "pt-[3px]"
              }`}
            >
              <span className="tracking-[0.46px] whitespace-nowrap">{cell.t}</span>
            </div>
          ))}
        </div>
      ))}
    </div>
  );
}

const MONO = "font-['Liberation_Mono',monospace]";

function PduDialog() {
  return (
    <div className={`absolute top-[23px] left-[429px] flex h-[698px] w-[520px] flex-col bg-[#f0f0f0] text-[11px] text-black shadow-[0_2px_14px_2px_rgba(0,0,0,0.42)] ${VERDANA}`}>
      <div className={`flex h-[30px] shrink-0 items-center justify-between bg-[#0078d7] pr-px pl-[8px] text-[12px] text-white ${SEGOE}`}>
        <Fit w={174}>PDU Information at Device: R4H2</Fit>
        <div className="mt-[4px] flex h-[18px] w-[19px] items-center justify-center bg-[#c75050]">
          <svg width="6" height="6" viewBox="0 0 6 6">
            <path d="M.5.5l5 5M5.500.5l-5 5" stroke="#fff" strokeWidth="1.600" />
          </svg>
        </div>
      </div>
      <div className="flex h-[20px] shrink-0 items-end pl-[2px]">
        <div className="flex h-[18px] w-[79px] items-center justify-center border-t border-l border-[#d9d9d9]">
          <Fit w={59}>OSI Model</Fit>
        </div>
        <div className="-mb-px flex h-[21px] w-[152px] items-center justify-center border border-b-0 border-[#d9d9d9] bg-white pl-[2px]">
          <Fit w={127}>Outbound PDU Details</Fit>
        </div>
      </div>
      <div className="mr-[2px] mb-px ml-[2px] flex grow flex-col border-t border-r border-[#dcdcdc] bg-white pr-[13px] pb-[13px] pl-[11px]">
        <div className="mt-[11px] flex h-[14px] shrink-0 items-center gap-[3px]">
          <div className="mt-px h-px w-[7px] bg-[#dcdcdc]" />
          <Fit w={74}>PDU Formats</Fit>
          <div className="mt-px h-px grow bg-[#dcdcdc]" />
        </div>
        <div className="-mt-[6px] flex grow flex-col border-x border-b border-[#dcdcdc] px-[11px] pt-[16px] pb-[11px]">
          <div className="flex h-[586px] flex-col border border-[#828790]">
            <div className="flex h-[568px] shrink-0">
              <div className="flex w-[450px] shrink-0 flex-col items-start overflow-hidden pl-[14px] text-[#0c0c0c]">
                <div className={`mt-[5px] flex h-[14px] shrink-0 items-center leading-[14px] ${MONO}`}>
                  <div className="w-[50px] pl-px">0</div>
                  <div className="w-[50px] pl-px">4</div>
                  <div className="w-[101px] pl-px">8</div>
                  <div className="w-[23px]">16</div>
                  <div className="w-[161px]">19</div>
                  <div className="w-[22px]">31</div>
                  <div>Bits</div>
                </div>
                <Frame rows={ipRows} />
                <div className="mt-[12px] flex h-[14px] shrink-0 leading-[14px]"><Fit flat w={24} className="underline underline-offset-1">UDP</Fit></div>
                <div className={`mt-[9.5px] flex h-[14px] shrink-0 items-center leading-[14px] ${MONO}`}>
                  <div className="w-[159px] pl-px">0</div>
                  <div className="w-[146px]">16</div>
                  <div className="w-[27px]">31</div>
                  <div>Bits</div>
                </div>
                <Frame rows={udpRows} />
                <div className="mt-[21px] flex h-[14px] shrink-0 leading-[14px]"><Fit flat w={33} className="underline underline-offset-1">DHCP</Fit></div>
                <div className={`mt-[5.3px] flex h-[14px] shrink-0 items-center leading-[14px] ${MONO}`}>
                  <div className="w-[81px] pl-px">0</div>
                  <div className="w-[80px]">8</div>
                  <div className="w-[144px]">16</div>
                  <div className="w-[25px]">31</div>
                  <div>Bits</div>
                </div>
                <Frame rows={dhcpRows} />
                <div className="mt-[11.7px] flex h-[14px] shrink-0 leading-[14px]"><Fit flat w={167} className="underline underline-offset-1">DHCP Client Identifier Option</Fit></div>
                <div className={`mt-[4px] flex h-[18px] shrink-0 text-center leading-[15px] ${MONO}`}>
                  <div className="w-[20px] border border-[#777]">0</div>
                  <div className="ml-[60px] w-[20px] border border-[#777]">8</div>
                  <div className="ml-[63px] w-[20px] border border-[#777]">16</div>
                  <div className="ml-[124px] w-[20px] border border-[#777]">31</div>
                  <div className="ml-[3px] w-[40px] border border-[#777]">Bits</div>
                </div>
              </div>
              <div className="flex w-[15px] shrink-0 flex-col items-center bg-[#f0f0f0]">
                <div className="flex h-[17px] items-center pt-[3px]"><Chevron dir="up" /></div>
                <div className="mt-[102px] flex h-[359px] w-full shrink-0 items-center justify-center bg-[#cdcdcd]">
                  <div className="h-[10px] w-[9px] bg-[#f0f0f0]" />
                </div>
                <div className="mt-auto flex h-[16px] items-center"><Chevron dir="down" /></div>
              </div>
            </div>
            <div className="mt-px flex h-[15px] w-[449px] shrink-0 items-center bg-[#f0f0f0]">
              <div className="flex w-[17px] justify-center"><Chevron dir="left" /></div>
              <div className="flex h-[15px] w-[389px] items-center justify-center bg-[#cdcdcd] pr-[2px]">
                <div className="h-[9px] w-[10px] bg-[#f0f0f0]" />
              </div>
              <div className="ml-auto pr-[4px]"><Chevron dir="right" /></div>
            </div>
          </div>
        </div>
      </div>
    </div>
  );
}

/* ---------- page ---------- */

export default function App() {
  return (
    <div className={`relative flex h-[768px] w-[1366px] flex-col overflow-hidden bg-[#f0f0f0] ${VERDANA}`}>
      <div className="flex h-[23px] shrink-0 items-center bg-[#2f2f2f]">
        <div className="w-[557.5px]" />
        <Fit w={252} className={`mt-[2px] text-[12.5px] font-bold text-[#e4e4e4] ${SEGOE}`}>Win10 [Running] - Oracle VM VirtualBox</Fit>
        <svg width="80" height="16" viewBox="1280 3 80 16" className="mr-[6px] ml-auto">
          <path d="M1286 11h6" stroke="#b9b9b9" strokeWidth="1.700" />
          <path d="M1318.500 8h4v4zM1316 10v4h4z" fill="#b9b9b9" />
          <circle cx="1349" cy="11" r="7" fill="#8a68bd" />
          <path d="M1346.300 8.300l5.400 5.400M1351.700 8.300l-5.400 5.400" stroke="#2b2540" strokeWidth="1.700" />
        </svg>
      </div>
      <div className="flex h-[22px] shrink-0 items-center bg-[#747474] pl-[3px]">
        <PacketLogo size={15} />
        <Fit w={213} className={`ml-[5px] text-[12px] text-[#b3b3b3] ${SEGOE}`}>{"Cisco Packet Tracer - Z:\\dhcp_solved.pkt"}</Fit>
        <svg width="110" height="12" viewBox="1243 27 110 12" className="mr-[13px] ml-auto" fill="none" stroke="#a3a3a3">
          <path d="M1245 33.500h10M1290.500 30.500h7v7h-7zM1292.500 30.500v-2h7v7h-2M1336 28.500l10 9.500M1346 28.500l-10 9.500" />
        </svg>
      </div>
      <div className={`flex h-[20px] shrink-0 items-center border-b border-[#d9dde5] bg-white text-[11px] text-[#8e8e8e] ${TAHOMA}`}>
        <div className="w-[39px] pl-[7px]"><Fit w={16}>File</Fit></div>
        <div className="w-[34px]"><Fit w={19}>Edit</Fit></div>
        <div className="w-[53px]"><Fit w={38}>Options</Fit></div>
        <div className="w-[38px]"><Fit w={22}>View</Fit></div>
        <div className="w-[40px]"><Fit w={24}>Tools</Fit></div>
        <div className="w-[68px]"><Fit w={53}>Extensions</Fit></div>
        <div><Fit w={22}>Help</Fit></div>
      </div>
      <Toolbar />
      <div className="flex h-[25px] shrink-0 items-center border-t-2 border-b-[3px] border-t-[#524d3d] border-b-[#887740] bg-linear-to-b from-[#fce68f] to-[#f6dc6c] text-[11px] leading-[14px] text-[#1c1900]">
        <div className="flex h-full w-[363px] items-center border-r-2 border-[#f0ecd8] pl-[219px]"><Fit w={35}>[Root]</Fit></div>
        <div className="flex h-full w-[753px] items-center border-r-2 border-[#f0ecd8] pl-[588px]"><Fit w={99}>Tiled Background</Fit></div>
        <div className="flex grow items-center justify-center pt-px"><Fit w={50}>Viewport</Fit></div>
      </div>
      <div className="h-[2px] shrink-0 border-b border-[#909090] bg-[#e0e0e0]" />

      <div className="flex h-[484px] shrink-0">
        <div className="flex w-[949px] shrink-0 flex-col border-b border-l border-[#808593] bg-white">
          <Workspace />
          <div className="flex h-[16px] shrink-0 items-center bg-[#f0f0f0]">
            <div className="flex w-[17px] justify-center"><Chevron dir="left" /></div>
            <div className="ml-[162px] flex h-full w-[500px] items-center bg-[#cdcdcd]">
              <div className="ml-[178px] h-[10px] w-[10px] bg-[#f0f0f0]" />
            </div>
          </div>
        </div>
        <SimulationPanel />
        <SideTools />
      </div>

      <div className="flex h-[24px] shrink-0 items-center border-t-2 border-b-2 border-t-[#57513d] border-b-[#948142] bg-linear-to-b from-[#fce68f] to-[#f6dc6c] text-[11px] text-[#1c1900]">
        <div className="flex h-full w-[141px] items-center border-r-2 border-black pl-[16px]"><Fit w={114}>Time: 00:44:36.952</Fit></div>
        <div className="flex h-full w-[141px] items-center border-r-2 border-[#f0ecd8] pl-[14px]"><Fit w={120}>Power Cycle Devices</Fit></div>
        <Fit w={101}>PLAY CONTROLS:</Fit>
        <Fit w={28} className="ml-[16px]">Back</Fit>
        <div className="mr-[116px] ml-auto flex h-[22px] w-[98px] items-center justify-center border border-[#005499] bg-[#cce4f7]"><Fit w={55}>Event List</Fit></div>
      </div>

      <div className="flex h-[97px] shrink-0">
        <DevicePalette />
        <CableList />
        <div className="w-[163px] shrink-0 bg-[#f0f0f0]" />
        <ScenarioTable />
        <div className="grow bg-[#f0f0f0]" />
      </div>
      <Taskbar />

      <LogicalTab />
      <SimulationTab />
      <PduDialog />
    </div>
  );
}
